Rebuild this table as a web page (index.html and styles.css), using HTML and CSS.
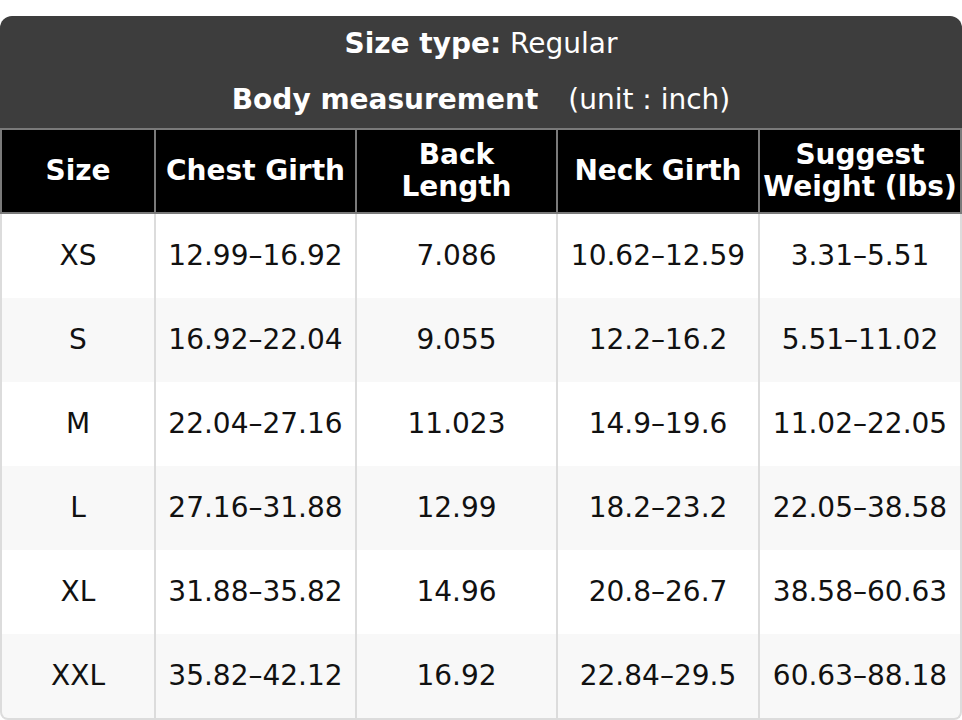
FILE: index.html
```html
<!DOCTYPE html>
<html lang="en">
<head>
<meta charset="utf-8">
<title>Size chart</title>
<link rel="stylesheet" href="styles.css">
</head>
<body>
<table class="chart">
  <colgroup>
    <col class="w1">
    <col class="w2">
    <col class="w3">
    <col class="w4">
    <col class="w5">
  </colgroup>
  <thead>
    <tr class="title-row">
      <th colspan="5" class="title title-top"><b>Size type:</b> Regular</th>
    </tr>
    <tr class="title-row">
      <th colspan="5" class="title title-bottom"><b>Body measurement</b> <span class="unit">(unit : inch)</span></th>
    </tr>
    <tr class="head-row">
      <th class="c1">Size</th>
      <th>Chest Girth</th>
      <th>Back Length</th>
      <th>Neck Girth</th>
      <th>Suggest Weight (lbs)</th>
    </tr>
  </thead>
  <tbody>
    <tr><td>XS</td><td>12.99–16.92</td><td>7.086</td><td>10.62–12.59</td><td>3.31–5.51</td></tr>
    <tr><td>S</td><td>16.92–22.04</td><td>9.055</td><td>12.2–16.2</td><td>5.51–11.02</td></tr>
    <tr><td>M</td><td>22.04–27.16</td><td>11.023</td><td>14.9–19.6</td><td>11.02–22.05</td></tr>
    <tr><td>L</td><td>27.16–31.88</td><td>12.99</td><td>18.2–23.2</td><td>22.05–38.58</td></tr>
    <tr><td>XL</td><td>31.88–35.82</td><td>14.96</td><td>20.8–26.7</td><td>38.58–60.63</td></tr>
    <tr><td>XXL</td><td>35.82–42.12</td><td>16.92</td><td>22.84–29.5</td><td>60.63–88.18</td></tr>
  </tbody>
</table>
</body>
</html>
```

FILE: styles.css
```css
html, body {
  margin: 0;
  padding: 0;
  background: #ffffff;
}

body {
  padding-top: 16px;
  font-family: "DejaVu Sans", "Liberation Sans", sans-serif;
  font-size: 28px;
  color: #111111;
}

.chart {
  width: 962px;
  border-collapse: separate;
  border-spacing: 0;
  table-layout: fixed;
}

.w1 { width: 156px; }
.w2 { width: 201px; }
.w3 { width: 201px; }
.w4 { width: 202px; }
.w5 { width: 202px; }

.chart th,
.chart td {
  box-sizing: border-box;
  padding: 0 2px;
  line-height: 32px;
  text-align: center;
  vertical-align: middle;
}

.title {
  background: #3d3d3d;
  color: #ffffff;
  font-weight: normal;
  height: 56px;
}

.title b {
  font-weight: bold;
}

.title-top {
  border-radius: 12px 12px 0 0;
}

.title-bottom {
  height: 58px;
  border-bottom: 2px solid #7a7a7a;
}

.unit {
  margin-left: 21px;
}

.head-row th {
  background: #000000;
  color: #ffffff;
  font-weight: bold;
  height: 84px;
  border-right: 2px solid #7a7a7a;
  border-bottom: 2px solid #7a7a7a;
}

.head-row th.c1 {
  border-left: 2px solid #7a7a7a;
}

.chart td {
  height: 84px;
  border-right: 2px solid #dcdcdc;
  background: #ffffff;
}

.chart td:first-child {
  border-left: 2px solid #dcdcdc;
}

.chart tbody tr:nth-child(even) td {
  background: #f8f8f8;
}

.chart tbody tr:last-child td {
  height: 86px;
  border-bottom: 2px solid #dcdcdc;
}

.chart tbody tr:last-child td:first-child {
  border-bottom-left-radius: 8px;
}

.chart tbody tr:last-child td:last-child {
  border-bottom-right-radius: 8px;
}
```
